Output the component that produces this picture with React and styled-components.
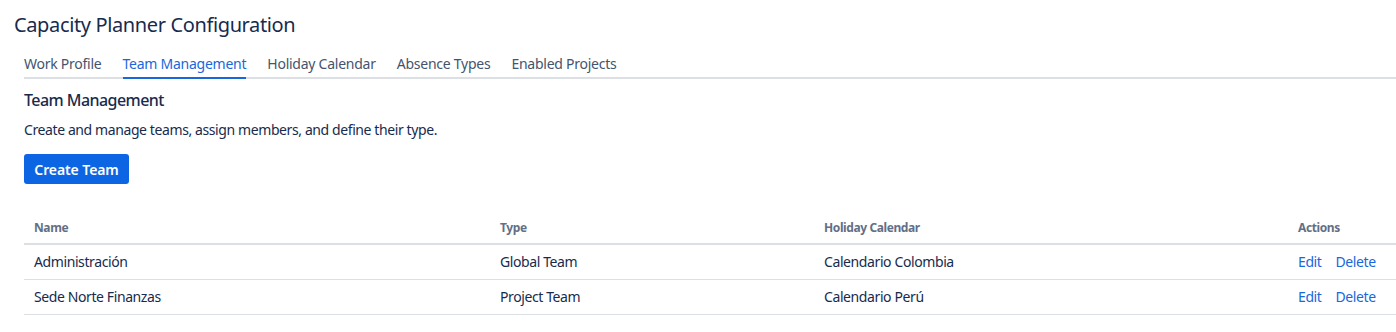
import React from "react"
import styled, { createGlobalStyle } from "styled-components"

const teams = [
  { name: "Administración", type: "Global Team", calendar: "Calendario Colombia" },
  { name: "Sede Norte Finanzas", type: "Project Team", calendar: "Calendario Perú" }
]

const tabs = ["Work Profile", "Team Management", "Holiday Calendar", "Absence Types", "Enabled Projects"]

const App = () => (
  <React.Fragment>
    <GlobalStyle />
    <Page>
      <Title>Capacity Planner Configuration</Title>
      <Content>
        <TabList>
          {tabs.map(tab => (
            <Tab key={tab} active={tab === "Team Management"}>
              {tab}
            </Tab>
          ))}
        </TabList>

        <Heading>Team Management</Heading>
        <Description>Create and manage teams, assign members, and define their type.</Description>
        <Button>Create Team</Button>

        <Table>
          <HeadRow>
            <HeadCell>Name</HeadCell>
            <HeadCell>Type</HeadCell>
            <HeadCell>Holiday Calendar</HeadCell>
            <HeadCell>Actions</HeadCell>
          </HeadRow>
          {teams.map(team => (
            <Row key={team.name}>
              <Cell>{team.name}</Cell>
              <Cell>{team.type}</Cell>
              <Cell>{team.calendar}</Cell>
              <Cell>
                <Actions>
                  <Link>Edit</Link>
                  <Link>Delete</Link>
                </Actions>
              </Cell>
            </Row>
          ))}
        </Table>
      </Content>
    </Page>
  </React.Fragment>
)

const GlobalStyle = createGlobalStyle`
  body {
    margin: 0;
    background: #fff;
    font-family: "Noto Sans", "Open Sans", sans-serif;
    color: #172b4d;
  }
`

const Page = styled.div`
  padding-top: 12px;
`

const Title = styled.h1`
  margin: 0 0 0 14px;
  font-size: 20px;
  line-height: 26px;
  font-weight: 400;
  color: #172b4d;
  letter-spacing: -0.37px;
`

const Content = styled.div`
  padding-left: 24px;
`

const TabList = styled.div`
  display: flex;
  gap: 21px;
  margin-top: 12px;
  border-bottom: 2px solid #dcdfe4;
`

const Tab = styled.div`
  font-size: 14px;
  line-height: 20px;
  padding: 4px 0 3px;
  margin-bottom: -2px;
  color: ${p => (p.active ? "#1868db" : "#44546f")};
  border-bottom: 2px solid ${p => (p.active ? "#1868db" : "transparent")};
  letter-spacing: -0.25px;
`

const Heading = styled.h2`
  margin: 10px 0 0;
  font-size: 16px;
  line-height: 22px;
  font-weight: 500;
  color: #172b4d;
  letter-spacing: -0.55px;
`

const Description = styled.p`
  margin: 9px 0 0;
  font-size: 14px;
  line-height: 20px;
  color: #172b4d;
  letter-spacing: -0.4px;
`

const Button = styled.button`
  display: block;
  margin-top: 14px;
  height: 30px;
  width: 105px;
  padding: 0;
  border: none;
  border-radius: 3px;
  background: #0c66e4;
  color: #fff;
  font-family: inherit;
  font-size: 14px;
  font-weight: 600;
  letter-spacing: -0.1px;
`

const Table = styled.div`
  margin-top: 27px;
`

const HeadRow = styled.div`
  display: grid;
  grid-template-columns: 466px 324px 474px 1fr;
  height: 32px;
  align-items: center;
  border-bottom: 2px solid #dcdfe4;
`

const HeadCell = styled.div`
  padding-left: 10px;
  font-size: 12px;
  font-weight: 700;
  color: #626f86;
  letter-spacing: -0.4px;
`

const Row = styled.div`
  display: grid;
  grid-template-columns: 466px 324px 474px 1fr;
  height: 34px;
  align-items: center;
  border-bottom: 1px solid #dcdfe4;
`

const Cell = styled.div`
  padding-left: 10px;
  padding-bottom: 1px;
  font-size: 14px;
  color: #172b4d;
  letter-spacing: -0.4px;
`

const Actions = styled.div`
  display: flex;
  gap: 14px;
`

const Link = styled.span`
  color: #1868db;
  cursor: pointer;
`

export default App
